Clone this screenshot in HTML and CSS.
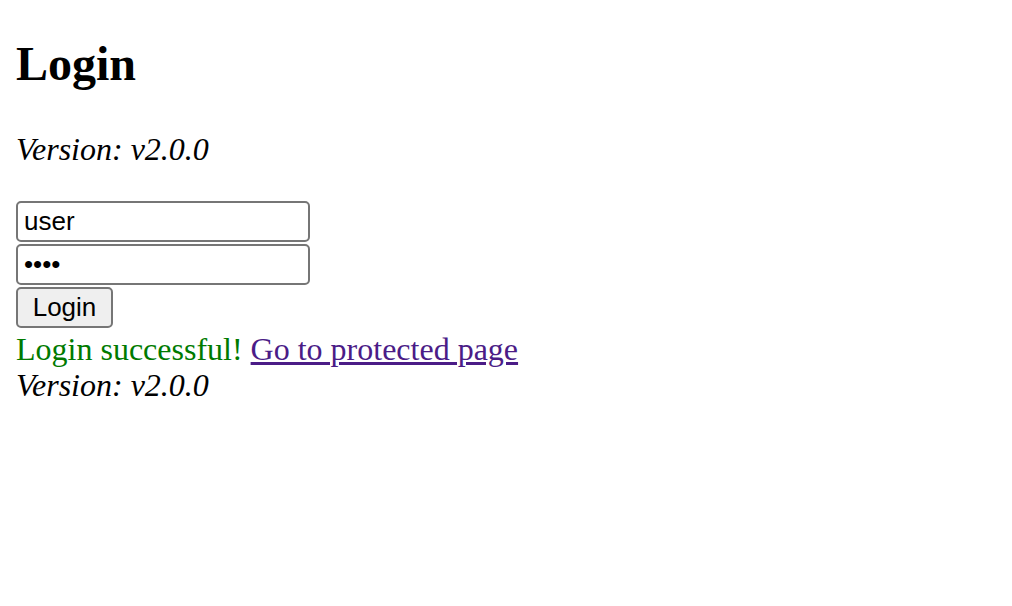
FILE: index.html
```html
<!DOCTYPE html>
<html lang="en">
<head>
<meta charset="utf-8">
<title>Login</title>
<link rel="stylesheet" href="styles.css">
</head>
<body>
<div class="page">
  <h2 class="title">Login</h2>
  <p class="version"><em>Version: v2.0.0</em></p>
  <form class="login-form">
    <input class="field" type="text" value="user">
    <input class="field" type="password" value="pass">
    <button class="btn" type="button">Login</button>
  </form>
  <div class="message"><span class="success">Login successful!</span> <a class="link" href="#">Go to protected page</a></div>
  <div class="footer-version"><em>Version: v2.0.0</em></div>
</div>
</body>
</html>
```

FILE: styles.css
```css
html, body {
  margin: 0;
  padding: 0;
  background: #ffffff;
}
.page {
  padding: 16px;
  font-family: "Liberation Serif", "Times New Roman", serif;
  font-size: 32px;
  color: #000000;
}
.title {
  margin: 20px 0 0;
  font-size: 48px;
  font-weight: bold;
  line-height: 55px;
}
.version {
  margin: 40px 0 0;
  line-height: 37px;
}
.login-form {
  margin: 33px 0 0;
  display: flex;
  flex-direction: column;
  align-items: flex-start;
  gap: 2px;
}
.field {
  box-sizing: border-box;
  width: 294px;
  height: 41px;
  margin: 0;
  padding: 0 6px;
  border: 2px solid #767676;
  border-radius: 5px;
  font-family: "Liberation Sans", Arial, sans-serif;
  font-size: 26px;
  color: #000000;
  background: #ffffff;
}
.btn {
  box-sizing: border-box;
  width: 97px;
  height: 41px;
  margin: 0;
  padding: 0;
  border: 2px solid #767676;
  border-radius: 5px;
  background: #efefef;
  font-family: "Liberation Sans", Arial, sans-serif;
  font-size: 26px;
  color: #000000;
}
.message {
  margin-top: 3px;
  line-height: 36px;
}
.success {
  color: #007a00;
}
.link {
  color: #4b1c87;
}
.footer-version {
  line-height: 36px;
}
```
